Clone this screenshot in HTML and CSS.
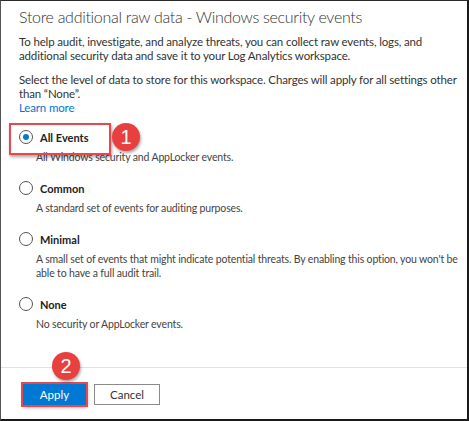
FILE: index.html
```html
<!DOCTYPE html>
<html lang="en">
<head>
<meta charset="utf-8">
<title>Store additional raw data</title>
<link rel="stylesheet" href="styles.css">
</head>
<body>
<div class="dialog">
  <h1 class="title">Store additional raw data - Windows security events</h1>
  <p class="intro">To help audit, investigate, and analyze threats, you can collect raw events, logs, and additional security data and save it to your Log Analytics workspace.</p>
  <p class="intro">Select the level of data to store for this workspace. Charges will apply for all settings other than “None”.<br><a class="link" href="#">Learn more</a></p>

  <div class="options">
    <div class="option">
      <div class="option-row highlighted">
        <span class="radio checked"></span>
        <span class="option-label">All Events</span>
        <span class="badge badge-one">1</span>
      </div>
      <p class="option-desc">All Windows security and AppLocker events.</p>
    </div>
    <div class="option">
      <div class="option-row">
        <span class="radio"></span>
        <span class="option-label">Common</span>
      </div>
      <p class="option-desc">A standard set of events for auditing purposes.</p>
    </div>
    <div class="option">
      <div class="option-row">
        <span class="radio"></span>
        <span class="option-label">Minimal</span>
      </div>
      <p class="option-desc">A small set of events that might indicate potential threats. By enabling this option, you won't be able to have a full audit trail.</p>
    </div>
    <div class="option">
      <div class="option-row">
        <span class="radio"></span>
        <span class="option-label">None</span>
      </div>
      <p class="option-desc">No security or AppLocker events.</p>
    </div>
  </div>

  <div class="footer">
    <div class="apply-wrap">
      <span class="badge badge-two">2</span>
      <button class="btn btn-primary" type="button">Apply</button>
    </div>
    <button class="btn btn-secondary" type="button">Cancel</button>
  </div>
</div>
</body>
</html>
```

FILE: styles.css
```css
* { box-sizing: border-box; }

html, body {
  margin: 0;
  padding: 0;
  background: #ffffff;
}

body {
  width: 469px;
  height: 421px;
  overflow: hidden;
  font-family: "Segoe UI", "Lato", "Open Sans", sans-serif;
  color: #333333;
}

.dialog {
  width: 469px;
  height: 421px;
  display: flex;
  flex-direction: column;
  border-top: 1px solid #2a2a2a;
  border-left: 1px solid #555555;
  border-right: 2px solid #1a1a1a;
  border-bottom: 2px solid #1a1a1a;
  background: #ffffff;
}

.title {
  margin: 0;
  padding: 5px 0 0 18px;
  font-size: 16px;
  line-height: 22px;
  font-weight: 300;
  letter-spacing: -0.3px;
  color: #333333;
  white-space: nowrap;
}

.intro {
  margin: 7px 0 0 0;
  padding: 0 8px 0 18px;
  font-size: 11.5px;
  line-height: 14px;
  letter-spacing: -0.15px;
  color: #333333;
}

.intro + .intro {
  margin-top: 10px;
}

.link {
  color: #0078d4;
  text-decoration: none;
}

.options {
  display: flex;
  flex-direction: column;
  gap: 14px;
  margin-top: 12px;
  padding-left: 18px;
}

.option-row {
  position: relative;
  display: flex;
  align-items: center;
  gap: 7px;
  height: 20px;
}

.highlighted::before {
  content: "";
  position: absolute;
  left: -10px;
  top: -4px;
  width: 98px;
  height: 28px;
  border: 2px solid #e5484d;
  box-shadow: 1px 2px 3px rgba(0, 0, 0, 0.35);
}

.radio {
  width: 14px;
  height: 14px;
  border-radius: 50%;
  border: 1px solid #555555;
  background: #ffffff;
  flex: none;
  display: flex;
  align-items: center;
  justify-content: center;
}

.radio.checked::after {
  content: "";
  width: 6px;
  height: 6px;
  border-radius: 50%;
  background: #0078d4;
}

.option-label {
  font-size: 11px;
  font-weight: 700;
  color: #222222;
}

.option-desc {
  margin: 3px 0 0 0;
  padding: 0 6px 0 17px;
  font-size: 10.5px;
  line-height: 14px;
  letter-spacing: -0.15px;
  color: #444444;
}

.badge {
  position: absolute;
  width: 28px;
  height: 28px;
  border-radius: 50%;
  background: #e8403f;
  color: #ffffff;
  font-family: "Liberation Sans", "Arial", sans-serif;
  font-size: 20px;
  line-height: 28px;
  text-align: center;
  box-shadow: 1px 2px 3px rgba(0, 0, 0, 0.35);
}

.badge-one {
  left: 93px;
  top: -4px;
}

.footer {
  margin-top: auto;
  border-top: 1px solid #e1e1e1;
  padding: 15px 0 14px 22px;
  display: flex;
  gap: 8px;
  align-items: center;
}

.apply-wrap {
  position: relative;
}

.badge-two {
  left: 29px;
  top: -31px;
}

.btn {
  font-family: "Segoe UI", "Lato", "Open Sans", sans-serif;
  font-size: 11.5px;
  height: 21px;
  padding: 0;
  cursor: pointer;
}

.btn-primary {
  width: 63px;
  background: #0078d4;
  color: #ffffff;
  border: 1px solid #0078d4;
  outline: 2px solid #e5484d;
  outline-offset: 0;
  box-shadow: 1px 2px 4px rgba(0, 0, 0, 0.45);
}

.btn-secondary {
  width: 66px;
  background: #ffffff;
  color: #333333;
  border: 1px solid #8a8a8a;
}
```
